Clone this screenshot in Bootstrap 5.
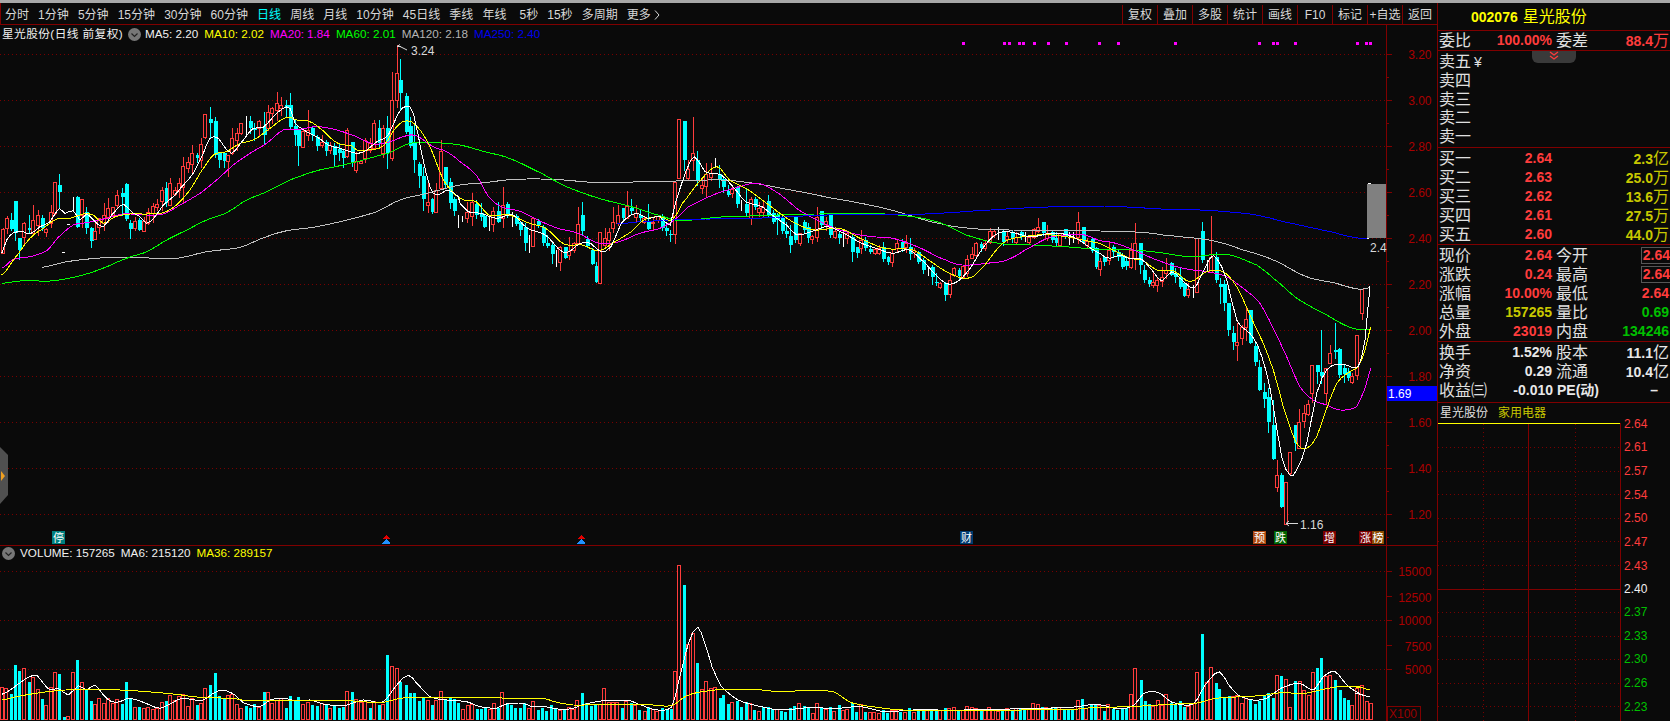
<!DOCTYPE html>
<html lang="zh">
<head>
<meta charset="utf-8">
<title>星光股份 日线</title>
<link href="https://cdn.jsdelivr.net/npm/bootstrap@5.3.0/dist/css/bootstrap.min.css" rel="stylesheet">
<style>
html,body{height:721px;overflow:hidden;background:#0a0a0a}
body{font-family:"Liberation Sans","Noto Sans CJK SC",sans-serif;color:#dcdcdc;font-size:12px;line-height:1}
.topstrip{height:3px;background:#a8a8a8;flex:none}
.mainrow{height:718px}
.leftcol{width:1437px;flex:none}
.tbar{height:22px;border-bottom:1px solid #800000;border-left:1px solid #800000;flex:none;padding-top:2px}
.tabset{gap:9.1px;padding-left:4px;align-items:center}
.tabitem{color:#d8d8d8;white-space:nowrap}
.tabitem.on{color:#00ffff}
.toolitem{width:35px;border-left:1px solid #800000;color:#d8d8d8;display:flex;align-items:center;justify-content:center;white-space:nowrap}
.chartwrap{height:696px}
.chartwrap svg{display:block}
.minibox svg{display:block;overflow:visible}
.legendrow{position:absolute;left:2px;top:2px;height:14px;gap:6px;align-items:center;white-space:nowrap;font-size:11.7px}
.legendvol{left:2px;top:521px}
.legendtitle{letter-spacing:.4px}
.fold{width:13px;height:13px;flex:none;margin:0 -2px 0 -1px}
.fold2{margin:0 -1px 0 0}
.c-w{color:#f0f0f0}.c-y{color:#ffff00}.c-m{color:#ff00ff}.c-g{color:#00ff00}.c-s{color:#b4b4b4}.c-b{color:#0000ee}
.sidetab{position:absolute;left:0;top:422px}
.quotepanel{width:233px;border-left:1px solid #800000;flex:none;position:relative}
.qhead{height:28px;border-bottom:1px solid #800000;color:#ffff00;gap:5px;padding:1px 0 0 33px;align-items:center;flex:none}
.qhead b{font-size:14px}.qhead span{font-size:16px}
.qsec{border-bottom:1px solid #800000;flex:none;padding-top:1px}
.qh20{height:20px;padding-top:0}.qh97{height:97px}.qh61{height:61px}
.qsell{padding-top:2px}
.qrow{height:19px;line-height:19px;padding-left:1px;display:flex;white-space:nowrap;font-size:16px;color:#e0e0e0}
.qsell .qrow{height:18.8px;line-height:18.8px}
.qyen{font-size:14px;margin-left:3px}
.qv{width:81px;text-align:right;font-size:14px;font-weight:700}
.qvshort{width:66px}
.ql{margin-left:4px;width:44px}
.qr{flex:1;text-align:right;font-size:14px;font-weight:700;padding-right:1px}
.qr i{font-style:normal;font-weight:400;font-size:16px}
.up{color:#ff3c3c}.dim{color:#c8c800}.dn{color:#00c000}.wt{color:#e8e8e8}
.boxval{border:1px solid #565656;border-right:0;padding:0 0 0 1px;height:17px;line-height:15px;margin:1px -1px 0 0;display:inline-block}
.qpe{font-size:14px;width:60px;font-weight:700;color:#e8e8e8}
.qdash{padding-right:12px}
.handle{position:absolute;left:94px;top:48px;width:44px;height:12px;background:#3a3a3a;border-radius:0 0 6px 6px}
.minihead{height:20px;flex:none;gap:10px;padding-left:2px;align-items:center;color:#e0e0e0}
.minihead span+span{color:#c8c800}
.minibox{height:298px;flex:none}
svg text{font-family:"Liberation Sans","Noto Sans CJK SC",sans-serif}
.ax{fill:#aa0000;font-size:12px;text-anchor:end}
.mr{fill:#ff3c3c;font-size:12px}.mw{fill:#f0f0f0;font-size:12px}.mg{fill:#00c000;font-size:12px}
.mk{fill:#fff;font-size:11px;text-anchor:middle}
.tip{fill:#d8d8d8;font-size:12px}
</style>
</head>
<body class="d-flex flex-column m-0">
<div class="topstrip"></div>
<div class="d-flex mainrow">
  <div class="leftcol d-flex flex-column">
    <nav class="tbar d-flex justify-content-between">
      <div class="d-flex tabset">
        <span class="tabitem">分时</span><span class="tabitem">1分钟</span><span class="tabitem">5分钟</span><span class="tabitem">15分钟</span><span class="tabitem">30分钟</span><span class="tabitem">60分钟</span><span class="tabitem on">日线</span><span class="tabitem">周线</span><span class="tabitem">月线</span><span class="tabitem">10分钟</span><span class="tabitem">45日线</span><span class="tabitem">季线</span><span class="tabitem">年线</span><span class="tabitem ms-1">5秒</span><span class="tabitem">15秒</span><span class="tabitem">多周期</span><span class="tabitem">更多 <svg width="6" height="10" viewBox="0 0 6 10"><path d="M1 0.5 5 5 1 9.5" fill="none" stroke="#d8d8d8"/></svg></span>
      </div>
      <div class="d-flex">
        <span class="toolitem">复权</span><span class="toolitem">叠加</span><span class="toolitem">多股</span><span class="toolitem">统计</span><span class="toolitem">画线</span><span class="toolitem">F10</span><span class="toolitem">标记</span><span class="toolitem">+自选</span><span class="toolitem">返回</span>
      </div>
    </nav>
    <div class="chartwrap position-relative">
      <svg id="kchart" width="1437" height="696" viewBox="0 25 1437 696" xmlns="http://www.w3.org/2000/svg">
        <g id="gfx"></g>
        <g>
          <text class="ax" x="1431.5" y="58.5">3.20</text><text class="ax" x="1431.5" y="104.5">3.00</text><text class="ax" x="1431.5" y="150.5">2.80</text><text class="ax" x="1431.5" y="196.5">2.60</text><text class="ax" x="1431.5" y="242.5">2.40</text><text class="ax" x="1431.5" y="288.5">2.20</text><text class="ax" x="1431.5" y="334.5">2.00</text><text class="ax" x="1431.5" y="380.5">1.80</text><text class="ax" x="1431.5" y="426.5">1.60</text><text class="ax" x="1431.5" y="472.5">1.40</text><text class="ax" x="1431.5" y="518.5">1.20</text>
          <text class="ax" x="1431.5" y="575.5">15000</text><text class="ax" x="1431.5" y="601.5">12500</text><text class="ax" x="1431.5" y="624.5">10000</text><text class="ax" x="1431.5" y="650.5">7500</text><text class="ax" x="1431.5" y="673.5">5000</text>
          <text x="1389" y="718" fill="#990000" font-size="12">X100</text>
          <text x="1388" y="398" fill="#fff" font-size="12">1.69</text>
          <text class="tip" x="411" y="55">3.24</text>
          <text class="tip" x="1300" y="528.5">1.16</text>
          <text class="tip" x="1370" y="252" fill="#cfcfcf">2.4</text>
          <text class="mk" x="58.5" y="542">停</text><text class="mk" x="966.5" y="542">财</text><text class="mk" x="1259.5" y="542">预</text><text class="mk" x="1280.5" y="542">跌</text><text class="mk" x="1329.5" y="542">增</text><text class="mk" x="1365.5" y="542">涨</text><text class="mk" x="1378" y="542">榜</text>
        </g>
      </svg>
      <div class="legendrow d-flex">
        <span class="c-w legendtitle">星光股份(日线 前复权)</span>
        <svg class="fold" viewBox="0 0 13 13"><circle cx="6.5" cy="6.5" r="6.5" fill="#777"/><path d="M3.5 5.5 6.5 8.5 9.5 5.5" fill="none" stroke="#222" stroke-width="1.2"/></svg>
        <span class="c-w">MA5: 2.20</span><span class="c-y">MA10: 2.02</span><span class="c-m">MA20: 1.84</span><span class="c-g">MA60: 2.01</span><span class="c-s">MA120: 2.18</span><span class="c-b">MA250: 2.40</span>
      </div>
      <div class="legendrow legendvol d-flex">
        <svg class="fold fold2" viewBox="0 0 13 13"><circle cx="6.5" cy="6.5" r="6.5" fill="#777"/><path d="M3.5 5.5 6.5 8.5 9.5 5.5" fill="none" stroke="#222" stroke-width="1.2"/></svg>
        <span class="c-w">VOLUME: 157265</span><span class="c-w">MA6: 215120</span><span class="c-y">MA36: 289157</span>
      </div>
      <svg class="sidetab" width="9" height="58" viewBox="0 0 9 58"><path d="M0 0 8 8V48L0 57Z" fill="#505050"/><path d="M1 24 5 29 1 34Z" fill="#f0a020"/></svg>
    </div>
  </div>
  <aside class="quotepanel d-flex flex-column">
    <div class="qhead d-flex"><b>002076</b><span>星光股份</span></div>
    <div class="qsec qh20"><div class="qrow"><span>委比</span><span class="qv up">100.00%</span><span class="ql">委差</span><span class="qr up">88.4<i>万</i></span></div></div>
    <div class="qsec qh97 qsell">
      <div class="qrow"><span>卖五</span><span class="qyen">¥</span></div>
      <div class="qrow">卖四</div><div class="qrow">卖三</div><div class="qrow">卖二</div><div class="qrow">卖一</div>
    </div>
    <div class="qsec qh97">
      <div class="qrow"><span>买一</span><span class="qv up">2.64</span><span class="qr dim">2.3<i>亿</i></span></div>
      <div class="qrow"><span>买二</span><span class="qv up">2.63</span><span class="qr dim">25.0<i>万</i></span></div>
      <div class="qrow"><span>买三</span><span class="qv up">2.62</span><span class="qr dim">13.6<i>万</i></span></div>
      <div class="qrow"><span>买四</span><span class="qv up">2.61</span><span class="qr dim">27.5<i>万</i></span></div>
      <div class="qrow"><span>买五</span><span class="qv up">2.60</span><span class="qr dim">44.0<i>万</i></span></div>
    </div>
    <div class="qsec qh97">
      <div class="qrow"><span>现价</span><span class="qv up">2.64</span><span class="ql">今开</span><span class="qr up"><span class="boxval">2.64</span></span></div>
      <div class="qrow"><span>涨跌</span><span class="qv up">0.24</span><span class="ql">最高</span><span class="qr up"><span class="boxval">2.64</span></span></div>
      <div class="qrow"><span>涨幅</span><span class="qv up">10.00%</span><span class="ql">最低</span><span class="qr up">2.64</span></div>
      <div class="qrow"><span>总量</span><span class="qv dim">157265</span><span class="ql">量比</span><span class="qr dn">0.69</span></div>
      <div class="qrow"><span>外盘</span><span class="qv up">23019</span><span class="ql">内盘</span><span class="qr dn">134246</span></div>
    </div>
    <div class="qsec qh61">
      <div class="qrow"><span>换手</span><span class="qv wt">1.52%</span><span class="ql">股本</span><span class="qr wt">11.1<i>亿</i></span></div>
      <div class="qrow"><span>净资</span><span class="qv wt">0.29</span><span class="ql">流通</span><span class="qr wt">10.4<i>亿</i></span></div>
      <div class="qrow"><span>收益㈢</span><span class="qv qvshort wt">-0.010</span><span class="ql qpe">PE(动)</span><span class="qr wt qdash">–</span></div>
    </div>
    <div class="minihead d-flex"><span>星光股份</span><span>家用电器</span></div>
    <div class="minibox">
      <svg width="232" height="298" viewBox="1438 423 232 298" xmlns="http://www.w3.org/2000/svg">
        <g id="mini" shape-rendering="crispEdges"></g>
        <text class="mr" x="1624" y="428">2.64</text><text class="mr" x="1624" y="451">2.61</text><text class="mr" x="1624" y="475">2.57</text><text class="mr" x="1624" y="498.5">2.54</text><text class="mr" x="1624" y="522">2.50</text><text class="mr" x="1624" y="545.5">2.47</text><text class="mr" x="1624" y="569.5">2.43</text>
        <text class="mw" x="1624" y="593">2.40</text>
        <text class="mg" x="1624" y="616">2.37</text><text class="mg" x="1624" y="640">2.33</text><text class="mg" x="1624" y="663">2.30</text><text class="mg" x="1624" y="687">2.26</text><text class="mg" x="1624" y="710.5">2.23</text>
      </svg>
    </div>
    <div class="handle d-flex justify-content-center"><svg width="12" height="10" viewBox="0 0 12 10"><path d="M2 1 6 4 10 1M2 5 6 8 10 5" fill="none" stroke="#ff3c3c" stroke-width="1.3"/></svg></div>
  </aside>
</div>
<script>
(function(){
var BG='#0a0a0a',RED='#ff3c3c',CY='#00ffff',GRID='#780000',AX='#800000';
function parseC(str,ox,oy,sx){return str.trim().split(';').map(function(s){
  var p=s.trim().split(/\s+/);return {x:ox+(+p[0])/sx,t:p[1],v:p.slice(2).map(function(n){return oy+(+n)/3;})};});}
var z6="8 r 565 568 640 640;20 r 528 535 565 580;33 c 520 540 568 570;46 c 483 483 580 600;58 c 595 595 630 657;73 r 545 548 590 610;86 c 525 565 570 580;100 r 495 540 580 582;113 r 510 525 555 585;127 c 525 535 565 570;139 r 565 568 575 588;152 r 495 515 548 560;166 r 425 425 520 522;178 c 403 435 455 505;220 w 472 510;232 c 468 470 560 560;245 r 478 478 525 560;259 c 500 515 565 580;272 c 562 565 603 620;285 r 548 572 597 598;298 r 535 535 560 578;312 r 488 525 550 570;325 r 475 505 530 545;338 r 500 500 525 525;351 r 450 465 495 500;365 c 445 458 470 525;379 c 430 433 538 540;391 c 540 550 568 595;405 r 530 543 565 570;418 c 535 540 570 570;431 r 530 542 572 574;445 r 505 515 550 552;458 r 488 498 518 545;472 r 478 492 500 510;485 r 440 450 482 510;498 c 425 445 490 498;511 r 413 430 495 496;524 r 440 450 462 465;537 r 415 430 450 470;550 r 350 377 440 485;564 r 350 367 385 395;577 r 315 340 372 400;591 c 338 345 355 365;604 r 295 312 360 380;616 r 222 222 290 295;631 c 202 238 248 290;644 c 230 243 345 350;658 c 335 340 360 380;671 c 338 340 362 380;685 r 345 345 362 408;697 r 265 293 340 342;710 r 265 278 300 330;724 r 250 250 278 282;737 w 228 285;751 c 228 242 265 280;763 c 250 265 270 300;778 r 240 242 265 285;791 c 215 258 285 310;803 r 195 215 265 270;817 r 200 205 218 250;830 r 155 188 210 240;844 r 170 195 203 225;857 c 180 195 203 230;871 c 158 195 260 265;884 c 240 258 285 315;895 c 270 270 318 375;910 r 270 272 320 322;923 r 210 270 285 300;937 c 262 263 285 300;950 c 285 290 318 330;965 r 285 305 315 320;977 c 300 305 333 345;989 r 305 315 330 340;1003 c 310 318 345 375;1016 c 310 328 338 360;1030 c 330 332 355 380;1042 r 265 270 348 350;1057 c 305 305 365 378;1069 r 335 362 390 395;1082 r 360 362 368 370;1096 r 295 300 355 365;1109 r 295 310 330 335;1122 r 240 250 325 325;1136 c 240 265 310 320;1150 r 255 265 340 350;1162 c 228 265 340 385;1175 r 95 180 355 360;1190 r 15 100 180 200;1201 c 58 120 160 210;1217 c 160 168 275 278;1229 c 230 258 318 320;1243 c 255 305 360 395;1256 c 365 372 408 440;1268 c 380 408 478 510;1283 r 430 485 495 517;1295 c 475 478 515 518;1309 r 430 450 515 515;1322 r 300 332 445 445;1336 c 380 380 435 440;1349 c 415 425 490 505;1361 c 470 478 512 525";
var z10="10 w 315 355;22 w 318 335;37 r 275 305 325 335;50 r 250 275 318 345;64 c 270 282 315 325;77 c 280 308 322 330;88 c 315 318 350 350;102 w 320 362;115 r 292 304 343 362;130 c 275 304 335 335;143 r 230 285 325 350;157 c 275 283 312 320;170 w 305 350;182 c 312 318 342 345;195 c 335 337 360 375;209 c 340 352 400 420;222 w 375 430;235 r 320 325 407 407;250 c 328 332 345 350;263 c 345 352 400 405;275 c 375 400 408 412;290 c 395 405 432 460;302 w 420 472;316 r 408 412 455 480;329 c 410 412 443 445;343 r 380 422 435 448;356 r 395 400 420 425;368 r 292 343 400 403;382 c 275 316 362 375;395 c 378 388 408 412;410 c 415 420 462 462;422 c 455 468 516 516;436 r 365 365 518 518;449 r 355 385 405 415;461 r 355 365 390 420;475 r 292 337 355 365;488 r 285 316 340 345;503 c 295 295 325 330;515 r 243 288 325 325;529 c 268 293 303 310;542 r 285 310 320 335;555 c 300 315 325 335;568 r 320 325 335 340;580 c 283 335 358 358;595 r 320 335 340 358;608 r 315 318 330 335;622 c 313 318 355 360;634 c 340 355 362 375;646 c 360 372 376 392;661 r 215 215 373 398;673 r 28 28 205 205;688 c 33 33 150 180;700 r 150 178 205 210;715 r 22 130 150 180;727 c 123 150 210 225;740 r 205 225 235 248;754 r 160 192 228 260;767 r 158 188 200 210;781 w 145 170;793 c 165 193 210 230;805 c 200 208 232 245;820 c 225 243 255 258;832 r 225 237 248 262;847 c 228 232 283 290;859 w 270 303;874 c 235 283 310 315;887 r 262 268 325 342;899 c 262 268 290 298;913 r 275 295 305 318;925 r 275 290 305 320;940 c 255 272 315 320;953 c 300 308 335 340;967 c 310 315 330 372;980 c 315 325 362 368;992 c 335 362 372 382;1005 c 345 378 405 425";
var z11="0 c 80 82 150 155;14 r 130 130 160 165;26 c 90 95 120 125;40 c 100 110 145 155;52 r 135 138 147 160;65 r 50 80 140 152;79 c 62 62 105 115;92 r 80 92 103 120;106 c 72 72 135 140;119 r 115 122 142 145;133 c 125 132 145 160;145 w 120 170;157 r 125 130 145 160;172 c 135 140 185 212;185 c 170 172 190 200;199 r 120 150 175 190;211 c 140 150 175 180;225 c 165 178 185 188;239 r 175 178 190 192;252 r 165 175 190 192;265 c 155 172 207 212;278 c 198 200 215 222;292 r 180 188 215 228;305 r 150 160 175 182;320 c 148 155 175 182;332 r 135 160 172 185;344 c 145 170 192 207;358 r 175 180 185 200;370 c 183 185 215 220;385 c 205 210 240 250;398 w 228 258;411 c 225 230 262 282;424 c 250 277 280 285;436 r 275 278 292 295;451 c 275 278 315 330;464 r 250 270 312 320;478 r 232 235 255 258;491 c 235 240 258 265;505 r 225 228 262 265;517 r 195 208 250 258;530 r 170 192 203 205;544 r 155 158 195 198;557 c 155 162 173 182;571 r 150 158 175 180;584 r 115 122 155 158;598 r 120 122 135 140;610 w 112 150;623 c 120 122 155 165;637 r 125 138 148 155;650 c 122 130 145 155;663 r 125 140 155 160;677 c 120 125 142 148;690 w 125 155;703 r 140 142 155 160;716 r 115 118 142 145;730 r 85 112 122 125;743 c 97 97 130 135;756 r 105 130 145 150;770 c 120 125 150 155;783 c 125 145 160 165;796 r 130 130 165 165;809 c 118 118 138 145;822 w 125 165;835 w 125 160;850 r 67 97 140 160;863 c 110 112 158 160;877 r 145 152 165 170;890 c 145 147 182 185;902 c 170 175 230 235;916 r 205 212 238 255";
var z5="13 c 168 170 185 195;27 r 125 150 180 192;40 c 135 140 155 170;54 c 150 155 170 180;67 c 160 165 200 205;79 c 170 183 197 208;93 r 130 150 200 205;106 r 70 130 175 208;121 c 130 130 195 220;133 c 195 210 240 245;148 c 230 240 252 258;160 r 215 247 255 262;172 r 235 240 255 272;186 r 200 232 242 258;199 r 175 210 220 235;214 c 185 190 225 225;226 c 205 218 232 245;241 c 205 230 262 265;253 c 250 250 287 287;265 r 250 267 285 290;278 w 255 293;292 r 115 115 275 275;307 c 67 93 180 185;320 w 180 215;333 r 48 172 215 215;347 c 155 172 240 245;359 c 235 252 260 310;373 c 240 252 310 330;385 c 308 308 390 405;400 c 378 400 425 447;412 r 370 427 435 480;427 r 375 380 413 432;439 r 325 357 380 420;451 c 330 330 430 430;466 c 425 437 487 495;478 c 480 500 570 570;493 c 550 577 597 620;505 c 565 590 665 695;520 c 600 675 776 776;532 r 780 825 862 872;544 c 820 825 920 920;557 r 845 845 972 972;571 r 755 755 820 825;586 c 675 675 728 750;598 r 628 665 745 745;613 r 615 640 662 680;625 r 600 613 642 645;637 r 495 495 578 607;652 c 495 495 515 550;664 c 390 517 527 550;679 r 505 505 580 612;691 r 435 460 490 490;706 c 370 450 455 475;718 c 445 447 525 530;732 c 495 505 522 545;745 c 505 515 535 540;757 r 518 528 547 550;772 r 405 405 525 537;785 r 268 268 340 357";
var candles=[].concat(parseC(z6,0,40,3),parseC(z10,455,110,3),parseC(z11,795,190,3),parseC(z5,1100,200,3));

function parseV(str,ox,oy,sx,sy){var o=[],re=/(\d+)([rc])(\d+)/g,m;while(m=re.exec(str)){o.push({x:ox+(+m[1])/sx,t:m[2],y:oy+(+m[3])/sy});}return o;}
var v7="7r502,19r505,33c522,46c435,58c453,73r445,86c486,100r470,113r508,127c537,139r555,152r502,166r457,178c462,192c591,205r588,220r457,232c420,245r487,259c508,272c543,285r552,298r535,312r548,325r535,338r548,351r537,365c552,379c486,391c537,405r561,418c561,431r563,445r561,458r567,472r565,485r546,498c543,511r525,524r540,537r527,550r522,564r558,577r535,591c555,604r549,616r505,631c495,644c459,658c528,671c533,685r525,697r522,710r552,724r565,737c558,751c565,763c553,778r560,791c516,803r517,817r548,830r540,844r535,857c565,871c528,884c543,895c531,910r552,923r545,937c555,950c557,965r548,977c553,989r565,1003c557,1016c563,1030c560,1042r514,1057c516,1069r538,1082r545,1096r542,1109c565,1122r543,1136c555,1150r553,1162c405,1175r438,1190r445,1201c486,1217c495,1229c519,1243c519,1256c543,1268c530,1283r540,1295c555,1309r540,1322r514,1336c538,1349c533,1361c538,1375c549,1388r567,1403r555,1416r551,1430c567,1442c566,1455c563,1469r567,1482r550,1495c563";
var v12="37r157,52c190,64c195,76c205,91c205,102c190,118r205,130r182,145c210,157c205,169c213,184c195,196c205,211r210,223c210,238r202,250r208,262r180,277c160,289c190,304c198,316c192,331r193,343r145,356r185,370r185,382r187,397c204,409r182";
var v8="24c520,32r525,41c540,52r543,60c530,70r538,79r543,90c535,99c540,108c537,116r423,126r105,136c165,145r342,155r310,164c399,173r478,183r453,192r474,202r472,211c504,219c495,229c522,238r516,248c513,257c531,267c517,276r519,285c540,295r544,304c532,313c532,322c537,332r537,341c542,350c545,360c535,369c528,380r520,389c528,398c530,408r550,417r520,426c533,436r537,445c530,454r544,465c525,473r539,482r538,492c520,501c545,511r523,520c545,529r545,539r545,548r550,557c540,566c548,576r541,585r540,594c545,604r545,613c534,623r546,632c540,642c542,651r541,660c543,669c542,679r540,689c534,698r535,708r532,717c539,726r539,736r529,745r532,754r533,764c540,773r540,782r530,791r540,801r542,810c540,820r534,830c544,839r535,848c535,857c540,866r533,876r520,885r522,894c530,903r532,913c533,921c532,930r530,941c540,950c538,958c537,970r510,979c507,988r534,997c526,1006c523,1016r525,1025c543,1035r522,1045c537,1054c540,1064c538,1073c535,1082r492,1091r415,1103c450,1112c513,1121c522,1130r527,1139r510,1149r525,1158r492,1167c520,1176c522,1186c514,1195c530,1204r527,1213r520,1223r427,1234c312,1243r455,1253r412,1262c459,1270c477,1280c505,1290c498,1299r497,1308r495,1318r520,1327r503,1336c510,1346c522,1355c513,1365c497,1374c490,1383c505,1393r435,1401c438,1412r448,1420r530,1431c452,1440r453,1449r480,1459r495,1468r427,1477c414,1486c384,1495r437,1505r435,1515c450,1525c480,1534c503,1543c510,1552r525,1562r473";
var vols=[].concat(parseV(v7,0,520,3,3),parseV(v12,490,640,3,3),parseV(v8,620,530,2.119,3),[{x:1361.7,t:'r',y:685},{x:1366.7,t:'r',y:701},{x:1370.7,t:'r',y:703.3}]);

function P(pts,ox,oy,sx,lo,hi){var o=[];for(var i=0;i<pts.length;i+=2){var x=ox+pts[i]/sx,y=oy+pts[i+1]/3;if(x>=lo&&x<hi)o.push([x,y]);}return o;}
function curve(a,b,c){return [].concat(P(a,0,40,3,0,460),P(b,460,100,2.45,460,1100),P(c,1100,200,3,1100,1400));}
var lines={
 blue:{c:'#0000ff',p:[].concat(P([385,372,440,365,560,358,720,355,900,345,1140,342,1300,330,1420,322,1568,318],460,100,2.45,0,1100),P([0,18,100,22,200,28,300,30,380,35,450,42,500,52,550,65,620,80,700,97,760,112,800,115],1100,200,3,1100,1400))},
 gray:{c:'#c0c0c0',p:curve([125,682,200,665,300,654,400,652,470,655,530,655,620,635,720,622,800,590,860,572,950,560,1050,538,1130,515,1200,480,1260,465,1310,452,1380,436],[0,255,60,248,130,238,230,238,330,247,530,243,640,240,720,250,800,268,900,292,1040,325,1180,372,1280,388,1568,394],[0,93,130,97,190,105,290,115,350,125,430,150,520,180,620,230,700,248,780,268,810,262])},
 green:{c:'#00ff00',p:curve([5,730,70,722,150,723,230,710,300,688,380,655,440,635,500,600,560,570,620,540,680,518,740,480,800,455,870,420,950,392,1050,370,1170,338,1230,310,1300,308,1380,313],[0,135,60,155,120,175,200,220,260,260,340,295,420,320,500,350,540,362,630,352,660,350,780,345,870,342,1040,342,1120,352,1180,370,1240,405,1320,430,1400,435,1480,440,1568,445],[0,148,100,150,180,158,270,170,380,163,470,195,520,235,590,295,680,345,760,385,812,387])},
 magenta:{c:'#ff00ff',p:curve([5,685,40,658,90,650,140,632,175,592,220,555,260,548,320,535,370,522,440,525,490,522,540,495,600,460,650,420,700,375,750,340,800,310,850,270,900,268,950,260,1010,270,1070,290,1120,312,1170,305,1220,287,1250,288,1300,320,1340,335,1380,362],[0,185,40,225,70,290,100,320,150,335,190,360,240,385,290,400,340,430,390,425,440,400,490,385,525,360,560,320,620,285,680,262,730,250,780,280,830,330,900,375,960,400,1010,410,1060,415,1120,440,1190,480,1230,495,1290,490,1340,480,1400,440,1450,410,1530,405,1568,420],[0,122,40,128,100,150,170,180,250,205,320,215,375,228,430,265,480,310,520,385,560,470,600,560,640,600,680,615,720,630,770,620,795,565,812,505])},
 yellow:{c:'#ffff00',p:curve([5,705,40,660,90,595,130,565,170,537,210,535,250,522,280,525,310,550,345,530,390,522,440,522,490,518,530,495,570,450,600,400,640,345,680,335,720,310,760,300,810,265,860,232,890,240,925,243,960,265,1010,308,1055,318,1075,332,1105,330,1150,318,1190,260,1220,242,1250,258,1290,320,1330,420,1380,480],[0,295,40,305,70,345,120,345,170,370,210,385,255,432,300,435,340,452,380,425,420,395,450,360,490,350,520,360,545,310,590,240,630,200,660,240,700,265,740,300,790,345,830,375,870,390,930,385,980,415,1040,445,1110,450,1160,490,1200,520,1240,535,1270,515,1330,430,1380,410,1450,405,1568,430],[0,130,50,155,90,175,125,180,170,210,220,212,270,245,320,215,370,215,410,260,450,345,490,430,520,510,550,620,590,730,620,745,650,710,680,625,710,550,750,515,775,500,795,450,812,380])},
 white:{c:'#ffffff',p:curve([5,640,20,600,40,578,70,575,90,582,120,560,150,545,178,505,195,520,220,512,240,540,260,522,285,545,310,560,335,525,370,492,385,505,400,520,420,530,440,550,465,530,490,495,520,470,545,440,580,400,610,340,630,295,655,295,680,330,695,340,730,300,760,265,790,262,820,230,850,205,870,205,885,250,920,275,950,290,985,315,1020,325,1050,335,1075,340,1100,330,1130,305,1165,285,1195,220,1220,198,1240,220,1265,340,1290,440,1310,465,1345,450,1375,470],[0,310,20,335,50,340,90,355,130,345,165,385,190,395,215,410,240,445,262,458,295,430,320,430,345,455,370,440,395,370,430,340,460,355,490,350,515,375,530,300,555,210,575,170,600,215,640,225,670,262,700,305,740,320,770,350,800,375,825,405,860,395,900,380,940,400,985,430,1020,445,1060,460,1100,450,1140,490,1170,530,1200,553,1240,520,1290,430,1330,395,1400,410,1450,400,1500,410,1568,415],[0,160,30,175,60,165,85,175,125,178,160,215,185,243,215,215,240,235,280,265,300,235,330,175,350,175,380,240,410,360,450,400,475,440,500,520,520,620,545,770,570,825,590,810,620,730,650,580,680,510,715,492,745,497,775,500,795,420,810,258])}
};
var volWhite=[].concat(
 P([5,523,30,510,65,485,85,472,110,466,130,490,150,510,175,505,205,525,235,497,260,510,285,495,310,525,335,545,360,545,385,535,420,543,450,555,480,565,510,552,545,535,585,540,610,540,640,520,670,510,705,525,730,548,780,560,810,540,850,535,890,543,930,540,970,552,1030,557,1090,540,1150,545,1195,490,1225,466,1250,490,1290,530,1340,540,1400,545,1440,560,1490,565],0,520,3,0,499),
 P([30,200,55,190,100,190,120,198,165,200,210,208,250,205,275,195,310,187,340,182,400,182],490,640,3,499,626),
 P([15,510,50,528,80,540,110,530,125,450,145,340,165,292,180,340,195,410,215,470,250,510,300,530,340,540,400,533,460,535,510,530,560,545,620,540,720,540,800,538,880,535,940,533,970,530,1010,523,1060,537,1090,525,1110,490,1140,487,1170,517,1215,522,1240,465,1270,425,1290,465,1310,495,1340,510,1370,505,1400,475,1440,460,1470,480,1490,440,1515,425,1540,465,1568,490],620,530,2.119,626,1400),
 [[1355,693],[1370,697]]);
var volYellow=[].concat(
 P([5,540,50,530,100,521,170,512,250,508,360,510,440,515,520,522,600,532,700,535,740,542,900,541,1040,542,1120,547,1150,547,1200,535,1260,532,1480,533],0,520,3,0,495),
 P([0,172,60,175,160,175,200,187,250,195,270,195,420,197],490,640,3,495,626),
 P([50,523,110,527,140,498,170,486,220,478,300,480,330,484,450,484,490,518,550,533,600,540,840,540,960,538,1010,532,1080,530,1180,522,1220,520,1260,505,1360,497,1400,488,1450,490,1500,475,1540,468,1568,472],620,530,2.119,626,1400),
 [[1355,686],[1370,690]]);

function smooth(p){
  if(p.length<3)return p;var o=[];
  for(var i=0;i<p.length-1;i++){
    var a=p[i-1]||p[i],b=p[i],c=p[i+1],d=p[i+2]||c;
    var n=Math.max(1,Math.round((c[0]-b[0])/4.33));
    for(var k=0;k<n;k++){var t=k/n,t2=t*t,t3=t2*t;
      o.push([b[0]+(c[0]-b[0])*t,
        .5*((2*b[1])+(-a[1]+c[1])*t+(2*a[1]-5*b[1]+4*c[1]-d[1])*t2+(-a[1]+3*b[1]-3*c[1]+d[1])*t3)]);}
  }
  o.push(p[p.length-1]);return o;
}
function poly(p,c){var s=smooth(p).map(function(q){return q[0].toFixed(1)+','+q[1].toFixed(1);}).join(' ');
  return '<polyline points="'+s+'" fill="none" stroke="'+c+'" stroke-width="1" shape-rendering="crispEdges"/>';}
function ln(x1,y1,x2,y2,c,extra){return '<line x1="'+x1+'" y1="'+y1+'" x2="'+x2+'" y2="'+y2+'" stroke="'+c+'" '+(extra||'')+'/>';}
function rc(x,y,w,h,f){return '<rect x="'+x+'" y="'+y+'" width="'+w+'" height="'+h+'" fill="'+f+'"/>';}

var h='<g shape-rendering="crispEdges">';
[54,100,146,192,238,284,330,376,422,468,514].forEach(function(y){h+=ln(0,y+.5,1386,y+.5,GRID,'stroke-dasharray="1 3"');h+=ln(1387,y+.5,1392,y+.5,AX);h+=ln(1387,y+23.5,1389,y+23.5,AX);});
[571,620,669].forEach(function(y){h+=ln(0,y+.5,1386,y+.5,GRID,'stroke-dasharray="1 3"');h+=ln(1387,y+.5,1392,y+.5,AX);});
[596,645].forEach(function(y){h+=ln(1387,y+.5,1392,y+.5,AX);});
[962,1003,1008,1018,1022,1033,1047,1065,1098,1117,1174,1258,1272,1276,1294,1356,1365,1369].forEach(function(x){h+=rc(x,42,3,3,'#ff00ff');});
h+=rc(1367,184,19,54,'#808080');
h+=rc(1368,183,3,1,'#ffffff')+rc(1366,238,3,1,'#ffffff');
candles.forEach(function(k){
  var X=Math.round(k.x),v=k.v.map(Math.round);
  if(k.t==='w'){h+=rc(X,v[0],1,v[1]-v[0],'#fff');return;}
  var col=k.t==='r'?RED:CY;
  h+=rc(X,v[0],1,v[3]-v[0]+1,col);
  if(k.t==='r'){h+='<rect x="'+(X-1.5)+'" y="'+(v[1]+.5)+'" width="3" height="'+Math.max(1,v[2]-v[1])+'" fill="'+BG+'" stroke="'+RED+'"/>';}
  else{h+=rc(X-1,v[1],4,Math.max(1,v[2]-v[1]),CY);}
});
h+=rc(67,224,3,1,'#fff')+rc(62,252,3,1,'#fff');
vols.forEach(function(b){
  var X=Math.round(b.x),y=Math.round(b.y);
  if(b.t==='r'){h+='<rect x="'+(X-1.5)+'" y="'+(y+.5)+'" width="3" height="'+(719-y)+'" fill="'+BG+'" stroke="'+RED+'"/>';}
  else{h+=rc(X-1,y,3,720-y,CY);}
});
['gray','green','magenta','blue','yellow','white'].forEach(function(n){h+=poly(lines[n].p,lines[n].c);});
h+=poly(volWhite,'#ffffff')+poly(volYellow,'#ffff00');
h+=ln(1386.5,25,1386.5,721,AX)+ln(0,545.5,1437,545.5,AX);
h+='<rect x="1387.5" y="706.5" width="33" height="15" fill="none" stroke="'+AX+'"/>';
h+=rc(1387,386,50,15,'#0000ff');
[[52,13,'#007f7f'],[960,13,'#003a6f'],[1253,13,'#b04a10'],[1274,13,'#006400'],[1323,13,'#7a0000'],[1359,13,'#7a0000'],[1372,12,'#8a4a00']].forEach(function(m){h+=rc(m[0],531,m[1],13,m[2]);});
[386,581].forEach(function(x){
  h+='<path d="M'+(x+.5)+' 535 L'+(x+4.5)+' 539 H'+(x-3.5)+'Z" fill="#e00000"/>';
  h+='<path d="M'+(x+.5)+' 539 L'+(x+4.5)+' 543.5 H'+(x-3.5)+'Z" fill="#2090ff"/>';
});
h+='</g>';
h+='<path d="M407 50 400 46.5M397 46.5H401M397 46.5 400 44.5" fill="none" stroke="#d8d8d8"/>';
h+='<path d="M1286 523.5H1298M1286 523.5 1289 521M1286 523.5 1289 526" fill="none" stroke="#d8d8d8"/>';
document.getElementById('gfx').innerHTML=h;

var m='';
[447,471,494,518,541,565,612,636,659,683,706].forEach(function(y){m+=ln(1438,y+.5,1620,y+.5,GRID,'stroke-dasharray="1 3"');});
[1483,1575].forEach(function(x){m+=ln(x+.5,424,x+.5,721,GRID,'stroke-dasharray="1 3"');});
m+=ln(1438,589.5,1620,589.5,AX)+ln(1528.5,424,1528.5,721,AX)+ln(1620.5,423,1620.5,721,AX);
m+=ln(1438,423.5,1620,423.5,'#ffff00');
document.getElementById('mini').innerHTML=m;
})();
</script>
<script src="https://cdn.jsdelivr.net/npm/bootstrap@5.3.0/dist/js/bootstrap.bundle.min.js"></script>
</body>
</html>
